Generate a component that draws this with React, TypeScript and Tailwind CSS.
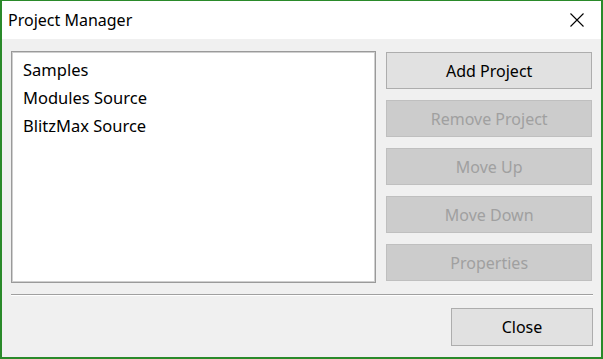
import React from 'react'

const projects = ['Samples', 'Modules Source', 'BlitzMax Source']

const actions = [
  { label: 'Add Project', enabled: true },
  { label: 'Remove Project', enabled: false },
  { label: 'Move Up', enabled: false },
  { label: 'Move Down', enabled: false },
  { label: 'Properties', enabled: false },
]

function DialogButton({ label, enabled, className = '' }: { label: string; enabled: boolean; className?: string }) {
  return (
    <button
      type="button"
      disabled={!enabled}
      className={
        'h-[37px] border text-[16px] leading-none ' +
        (enabled
          ? 'bg-[#e1e1e1] border-[#adadad] text-black'
          : 'bg-[#cccccc] border-[#bfbfbf] text-[#a0a0a0]') +
        ' ' +
        className
      }
    >
      {label}
    </button>
  )
}

export default function App() {
  return (
    <div
      className="w-[603px] h-[359px] flex flex-col border-t border-l-2 border-r-2 border-b-2 border-[#2a8a2a] bg-[#f0f0f0]"
      style={{ fontFamily: '"Noto Sans", "Open Sans", sans-serif' }}
    >
      <div className="h-[38px] bg-white flex items-center justify-between pl-[6px] pr-[16px] shrink-0">
        <span className="text-[16px] text-black">Project Manager</span>
        <svg width="16" height="16" viewBox="0 0 16 16" className="text-black">
          <path d="M1.5 1.5 L14.5 14.5 M14.5 1.5 L1.5 14.5" stroke="currentColor" strokeWidth="1.1" fill="none" />
        </svg>
      </div>

      <div className="flex-1 flex flex-col px-[9px] pt-[12px]">
        <div className="flex gap-[10px]">
          <div className="w-[366px] h-[232px] bg-white border border-[#9a9a9a] shadow-[inset_0_0_0_1px_#cfcfcf] pl-[11px] pt-[4px]">
            {projects.map((p) => (
              <div key={p} className="h-[28px] flex items-center text-[16.5px] text-black">
                {p}
              </div>
            ))}
          </div>
          <div className="flex flex-col gap-[11px] pt-[1px] w-[206px]">
            {actions.map((a) => (
              <DialogButton key={a.label} label={a.label} enabled={a.enabled} className="w-full" />
            ))}
          </div>
        </div>

        <div className="mt-[11px] w-[582px] border-t border-[#a0a0a0] border-b border-b-white" />

        <div className="flex justify-end w-[582px] mt-[12px]">
          <DialogButton label="Close" enabled className="w-[142px] h-[38px]" />
        </div>
      </div>
    </div>
  )
}
